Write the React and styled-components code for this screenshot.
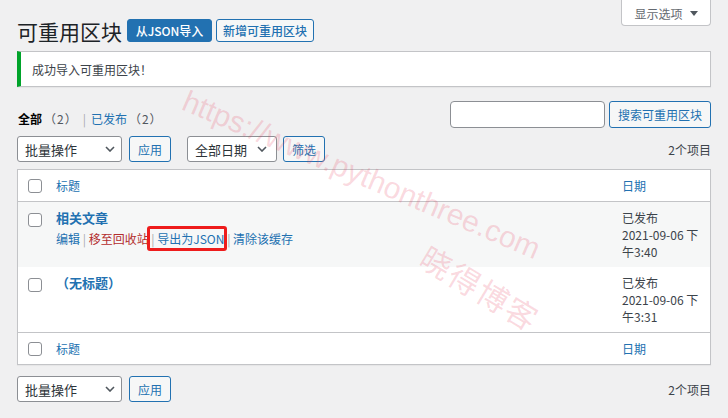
import React from 'react';
import styled, { createGlobalStyle } from 'styled-components';

const GlobalStyle = createGlobalStyle`
  html, body { margin: 0; padding: 0; }
  body {
    background: #f0f0f1;
    font-family: "Noto Sans CJK SC", "Noto Sans", sans-serif;
    font-size: 12px;
    line-height: 17px;
    color: #3c434a;
  }
  * { box-sizing: border-box; }
`;

const Page = styled.div`
  position: relative;
  padding: 0 17px 16px 17px;
  min-height: 418px;
  overflow: hidden;
`;

const ScreenOptions = styled.div`
  float: right;
  width: 90px;
  height: 26px;
  background: #fff;
  border: 1px solid #c3c4c7;
  border-top: none;
  border-radius: 0 0 4px 4px;
  color: #646970;
  font-size: 12px;
  display: flex;
  align-items: center;
  justify-content: center;
  gap: 7px;
  padding-top: 1px;
`;

const TitleRow = styled.div`
  display: flex;
  align-items: center;
  padding-top: 19px;
  height: 42px;
`;

const Title = styled.h1`
  margin: 0 5px 0 0;
  font-size: 21px;
  font-weight: 400;
  line-height: 24px;
  color: #1d2327;
`;

const PageAction = styled.a`
  display: inline-flex;
  align-items: center;
  justify-content: center;
  width: ${p => p.$w}px;
  height: 23px;
  margin-right: 4px;
  border: 1px solid #2271b1;
  border-radius: 3px;
  font-size: 12px;
  color: ${p => (p.$primary ? '#fff' : '#2271b1')};
  background: ${p => (p.$primary ? '#2271b1' : '#f6f7f7')};
  text-decoration: none;
  font-weight: 500;
`;

const Notice = styled.div`
  clear: both;
  margin-top: 9px;
  height: 36px;
  background: #fff;
  border: 1px solid #c3c4c7;
  border-left: 4px solid #00a32a;
  box-shadow: 0 1px 1px rgba(0, 0, 0, 0.04);
  padding: 9px 11px 0;
  color: #3c434a;
`;

const FilterRow = styled.div`
  display: flex;
  justify-content: space-between;
  align-items: flex-start;
  margin-top: 14px;
`;

const Subsubsub = styled.div`
  margin-top: 9px;
  margin-left: 1px;
  display: flex;
  align-items: center;
  color: #646970;
`;

const Current = styled.span`
  color: #000;
  font-weight: 700;
`;

const Count = styled.span`
  color: #50575e;
  margin-left: 2px;
  letter-spacing: 1px;
`;

const Sep = styled.span`
  color: #a7aaad;
  margin: 0 5px 0 5px;
`;

const Link = styled.a`
  color: ${p => (p.$danger ? '#b32d2e' : '#2271b1')};
  text-decoration: none;
`;

const SearchBox = styled.div`
  display: flex;
  gap: 4px;
`;

const SearchInput = styled.div`
  width: 155px;
  height: 27px;
  background: #fff;
  border: 1px solid #8c8f94;
  border-radius: 4px;
`;

const Button = styled.button`
  height: ${p => p.$h || 26}px;
  padding: 0 8px;
  border: 1px solid #2271b1;
  border-radius: 3px;
  background: #f6f7f7;
  color: #2271b1;
  font-family: inherit;
  font-size: 12px;
  line-height: 17px;
  margin-left: ${p => p.$ml || 0}px;
`;

const Tablenav = styled.div`
  display: flex;
  align-items: center;
  height: 26px;
  margin-top: ${p => p.$mt}px;
`;

const SelectBox = styled.div`
  display: flex;
  align-items: center;
  justify-content: space-between;
  width: ${p => p.$w}px;
  height: 26px;
  padding: 0 ${p => p.$pr}px 0 7px;
  margin-left: ${p => p.$ml || 0}px;
  background: #fff;
  border: 1px solid #8c8f94;
  border-radius: 3px;
  color: #2c3338;
  font-size: 13px;
`;

const ItemCount = styled.span`
  margin-left: auto;
  color: #3c434a;
`;

const Table = styled.table`
  width: 100%;
  margin-top: 7px;
  border: 1px solid #c3c4c7;
  border-spacing: 0;
  background: #fff;
  table-layout: fixed;
  box-shadow: 0 1px 1px rgba(0, 0, 0, 0.04);
`;

const Th = styled.th`
  text-align: left;
  font-weight: 400;
  padding: ${p => (p.$check ? '0 0 0 10px' : '7px 9px')};
  line-height: 17px;
  vertical-align: middle;
  color: #2271b1;
  border-bottom: ${p => (p.$foot ? 'none' : '1px solid #c3c4c7')};
  border-top: ${p => (p.$foot ? '1px solid #c3c4c7' : 'none')};
`;

const Row = styled.tr`
  background: ${p => (p.$alt ? '#f6f7f7' : '#fff')};
`;

const Td = styled.td`
  vertical-align: top;
  padding: ${p => (p.$check ? '11px 0 0 10px' : '7px 9px')};
  line-height: 17px;
  color: #3c434a;
`;

const Checkbox = styled.span`
  display: block;
  width: 14px;
  height: 14px;
  border: 1px solid #8c8f94;
  border-radius: 3px;
  background: #fff;
`;

const RowTitle = styled.a`
  display: block;
  font-size: 13px;
  font-weight: 700;
  color: #2271b1;
  text-decoration: none;
`;

const RowActions = styled.div`
  margin-top: 4px;
  white-space: nowrap;
  color: #a7aaad;
`;

const Marked = styled.span`
  position: relative;
  &::after {
    content: '';
    position: absolute;
    left: -10px;
    right: -3px;
    top: -4px;
    bottom: -4px;
    border: 3px solid #ee1c1c;
    border-radius: 3px;
  }
`;

const Watermark = styled.div`
  position: absolute;
  left: ${p => p.$x}px;
  top: ${p => p.$y}px;
  font-family: ${p => (p.$latin ? '"Liberation Sans", Arial, sans-serif' : '"Noto Sans CJK SC", sans-serif')};
  font-size: ${p => p.$size}px;
  letter-spacing: ${p => p.$ls || 0}px;
  line-height: 1;
  color: rgba(230, 60, 90, 0.2);
  white-space: nowrap;
  transform: rotate(${p => p.$deg}deg);
  transform-origin: 0 0;
  pointer-events: none;
`;

const Chevron = () => (
  <svg width="10" height="6" viewBox="0 0 10 6">
    <path d="M1 1 L5 5 L9 1" fill="none" stroke="#50575e" strokeWidth="1.6" />
  </svg>
);

const Caret = () => (
  <svg width="8" height="5" viewBox="0 0 8 5">
    <path d="M0 0 H8 L4 5 Z" fill="#50575e" />
  </svg>
);

const Bar = ({ mt, top }) => (
  <Tablenav $mt={mt}>
    <SelectBox $w={105} $pr={6}>
      <span>批量操作</span>
      <Chevron />
    </SelectBox>
    <Button $ml={7}>应用</Button>
    {top && (
      <>
        <SelectBox $w={90} $pr={9} $ml={16}>
          <span>全部日期</span>
          <Chevron />
        </SelectBox>
        <Button $ml={6}>筛选</Button>
      </>
    )}
    <ItemCount>2个项目</ItemCount>
  </Tablenav>
);

export default function App() {
  return (
    <>
      <GlobalStyle />
      <Page>
        <ScreenOptions>
          <span>显示选项</span>
          <Caret />
        </ScreenOptions>
        <TitleRow>
          <Title>可重用区块</Title>
          <PageAction $primary $w={85}>从JSON导入</PageAction>
          <PageAction $w={98}>新增可重用区块</PageAction>
        </TitleRow>
        <Notice>成功导入可重用区块！</Notice>

        <FilterRow>
          <Subsubsub>
            <Current>全部</Current>
            <Count>（2）</Count>
            <Sep>|</Sep>
            <Link>已发布</Link>
            <Count>（2）</Count>
          </Subsubsub>
          <SearchBox>
            <SearchInput />
            <Button $h={27}>搜索可重用区块</Button>
          </SearchBox>
        </FilterRow>

        <Bar mt={8} top />

        <Table>
          <colgroup>
            <col style={{ width: 29 }} />
            <col />
            <col style={{ width: 97 }} />
          </colgroup>
          <thead>
            <tr>
              <Th $check><Checkbox /></Th>
              <Th>标题</Th>
              <Th>日期</Th>
            </tr>
          </thead>
          <tbody>
            <Row $alt>
              <Td $check><Checkbox /></Td>
              <Td>
                <RowTitle>相关文章</RowTitle>
                <RowActions>
                  <Link>编辑</Link> | <Link $danger>移至回收站</Link> | <Marked><Link>导出为JSON</Link></Marked> | <Link>清除该缓存</Link>
                </RowActions>
              </Td>
              <Td>已发布<br />2021-09-06 下午3:40</Td>
            </Row>
            <Row>
              <Td $check><Checkbox /></Td>
              <Td>
                <RowTitle>（无标题）</RowTitle>
              </Td>
              <Td>已发布<br />2021-09-06 下午3:31</Td>
            </Row>
          </tbody>
          <tfoot>
            <tr>
              <Th $check $foot><Checkbox /></Th>
              <Th $foot>标题</Th>
              <Th $foot>日期</Th>
            </tr>
          </tfoot>
        </Table>

        <Bar mt={11} />

        <Watermark $latin $x={190} $y={86} $size={30} $deg={23}>https://www.pythonthree.com</Watermark>
        <Watermark $x={432} $y={240} $size={31} $ls={2} $deg={31}>晓得博客</Watermark>
      </Page>
    </>
  );
}
